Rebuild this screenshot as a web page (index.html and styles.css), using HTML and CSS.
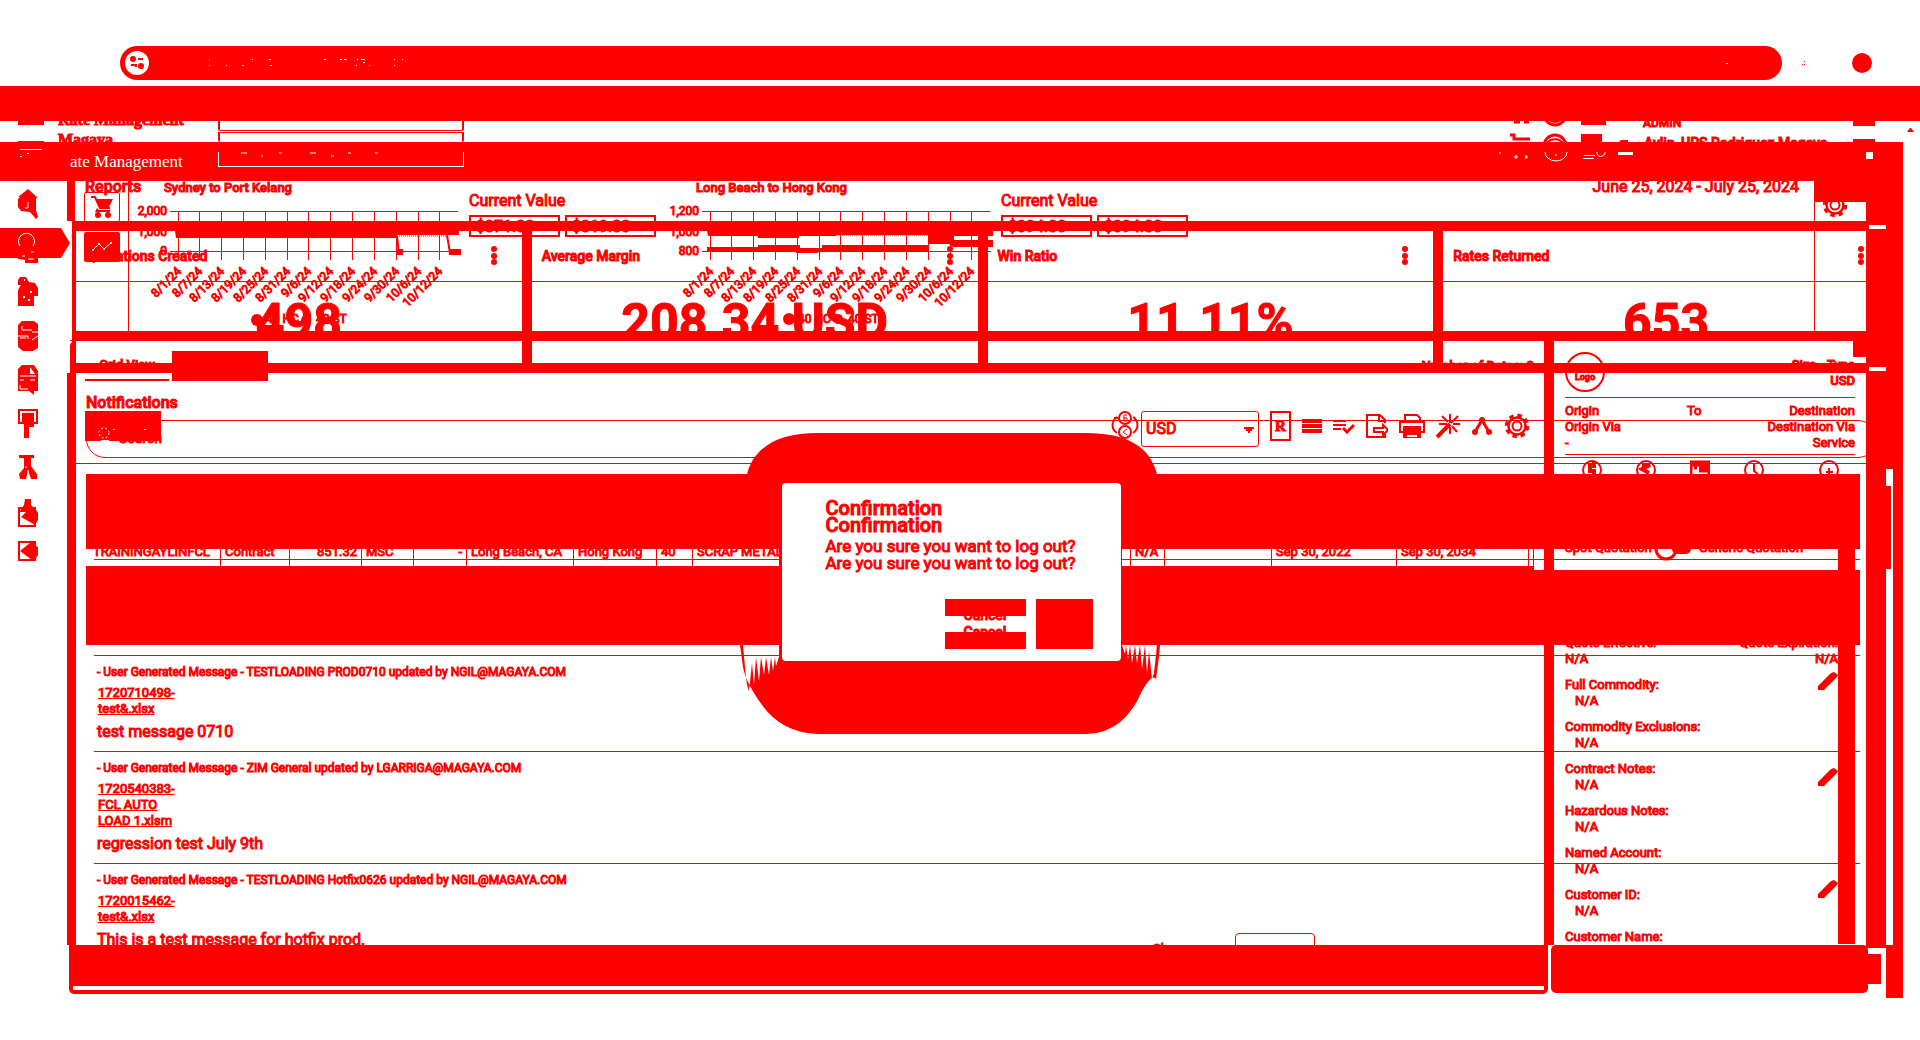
FILE: index.html
```html
<!DOCTYPE html>
<html lang="en">
<head>
<meta charset="utf-8">
<title>Rate Management</title>
<link rel="stylesheet" href="styles.css">
</head>
<body>
<svg class="defs" aria-hidden="true">
  <symbol id="gear" viewBox="0 0 26 26"><circle cx="13" cy="13" r="8.500" fill="none" stroke="#f00" stroke-width="2.500"/><circle cx="13" cy="13" r="10.500" fill="none" stroke="#f00" stroke-width="3.500" stroke-dasharray="4.500 3.750"/><circle cx="13" cy="13" r="4.500" fill="none" stroke="#f00" stroke-width="2"/></symbol>
  <symbol id="pencil" viewBox="0 0 20 18"><path d="M0 18v-4L13 1l3-1 4 3-1 2L6 18z" fill="#f00"/></symbol>
  <symbol id="gridlines" viewBox="0 0 333 150"><path d="M34 30.500H322M34 70.500H323M42.500 30v49M63.500 30v49M85.500 30v49M107.500 30v49M129.500 30v49M151.500 30v49M172.500 30v49M194.500 30v49M216.500 30v49M238.500 30v49M260.500 30v49M282.500 30v49M303.500 30v49" stroke="#f00" fill="none"/></symbol>
</svg>
<div class="stage">

<!-- Dashboard with reports and notifications -->
<main class="layer dash">
  <header class="reports"><h2>Reports</h2><p>June 25, 2024 - July 25, 2024</p></header>
  <section class="stats">
    <article><h3>Quotations Created<svg class="kebab" viewBox="0 0 6 20"><circle cx="3" cy="3" r="3"/><circle cx="3" cy="10" r="3"/><circle cx="3" cy="16" r="3"/></svg></h3><strong>498</strong></article>
    <article><h3>Average Margin<svg class="kebab" viewBox="0 0 6 20"><circle cx="3" cy="3" r="3"/><circle cx="3" cy="10" r="3"/><circle cx="3" cy="16" r="3"/></svg></h3><strong>208.34 USD</strong></article>
    <article><h3>Win Ratio<svg class="kebab" viewBox="0 0 6 20"><circle cx="3" cy="3" r="3"/><circle cx="3" cy="10" r="3"/><circle cx="3" cy="16" r="3"/></svg></h3><strong>11.11%</strong></article>
    <article><h3>Rates Returned<svg class="kebab" viewBox="0 0 6 20"><circle cx="3" cy="3" r="3"/><circle cx="3" cy="10" r="3"/><circle cx="3" cy="16" r="3"/></svg></h3><strong>653</strong></article>
    <div></div><div></div><div></div><div></div>
  </section>
  <section class="notices">
    <h2>Notifications</h2>
    <label class="search"><input type="text" placeholder="Search" aria-label="Search"></label>
    <div class="list">
      <div class="selected">
        <svg width="100" height="34" viewBox="0 0 100 34"><path d="M13 9.500h2M17 9.500h2M25 9.500h3M32 9.500h2M48 9.500h2M55 9.500h6M63 9.500h3M72 9.500h18M83 2.500h2M18 17.500h3M27 17.500h2M18 21h4M13 25.500h56" stroke="#fff"/></svg>
        <i></i>
      </div>
      <article>
        <div><h4>- User Generated Message - TESTLOADING PROD0710 updated by NGIL@MAGAYA.COM</h4><a href="#">1720710498-<br>test&amp;.xlsx</a><p>test message 0710</p></div>
        <button class="edit" aria-label="Edit"><svg width="20" height="18"><use href="#pencil"/></svg></button>
      </article>
      <article>
        <div><h4>- User Generated Message - ZIM General updated by LGARRIGA@MAGAYA.COM</h4><a href="#">1720540383-<br>FCL AUTO<br>LOAD 1.xlsm</a><p>regression test July 9th</p></div>
        <button class="edit" aria-label="Edit"><svg width="20" height="18"><use href="#pencil"/></svg></button>
      </article>
      <article>
        <div><h4>- User Generated Message - TESTLOADING Hotfix0626 updated by NGIL@MAGAYA.COM</h4><a href="#">1720015462-<br>test&amp;.xlsx</a><p>This is a test message for hotfix prod.</p></div>
        <button class="edit" aria-label="Edit"><svg width="20" height="18"><use href="#pencil"/></svg></button>
      </article>
    </div>
  </section>
</main>

<!-- Quote search: trend charts, rate grid, quote panel -->
<div class="layer quote">
  <section class="trends">
    <div class="tiles">
      <button class="cart" aria-label="Cart"><svg width="24" height="22" viewBox="0 0 24 22"><path d="M1 1h4l5 11h10" fill="none" stroke="#f00" stroke-width="2"/><path d="M5 3h18l-4 8H9zM7 12l-2 4h15v-2H9z" fill="#f00"/><circle cx="8" cy="19" r="3" fill="#f00"/><circle cx="18" cy="19" r="3" fill="#f00"/></svg></button>
      <button class="trend" aria-label="Trends"><svg width="22" height="12" viewBox="0 0 22 12"><path d="M2 9l6-6 5 5 7-6" fill="none" stroke="#fff"/><circle cx="2" cy="9" r="1" fill="#fff"/><circle cx="8" cy="3" r="1" fill="#fff"/><circle cx="13" cy="8" r="1" fill="#fff"/><circle cx="20" cy="2" r="1" fill="#fff"/></svg></button>
    </div>
    <div class="chart">
      <svg width="333" height="150" viewBox="0 0 333 150">
        <text x="28" y="11" class="t">Sydney to Port Kelang</text>
        <text x="31" y="34" class="e">2,000</text><text x="31" y="55" class="e">1,000</text><text x="31" y="74" class="e">0</text>
        <use href="#gridlines"/>
        <path d="M39 50h284v4h-62v3H40z" fill="#f00"/><path d="M261 55h50" stroke="#f00" stroke-dasharray="1 1"/>
        <path d="M261 55l2 18M311 54l3 18" stroke="#f00" stroke-width="2"/><path d="M260 68h7v6h-7zM313 68h12v6h-12z" fill="#f00"/>
        <g class="d"><text transform="translate(46 91) rotate(-45)">8/1/24</text><text transform="translate(67 91) rotate(-45)">8/7/24</text><text transform="translate(89 91) rotate(-45)">8/13/24</text><text transform="translate(111 91) rotate(-45)">8/19/24</text><text transform="translate(133 91) rotate(-45)">8/25/24</text><text transform="translate(155 91) rotate(-45)">8/31/24</text><text transform="translate(176 91) rotate(-45)">9/6/24</text><text transform="translate(198 91) rotate(-45)">9/12/24</text><text transform="translate(220 91) rotate(-45)">9/18/24</text><text transform="translate(242 91) rotate(-45)">9/24/24</text><text transform="translate(264 91) rotate(-45)">9/30/24</text><text transform="translate(286 91) rotate(-45)">10/6/24</text><text transform="translate(307 91) rotate(-45)">10/12/24</text></g>
        <circle cx="121" cy="139" r="6" fill="#f00"/><text x="130" y="142" class="g">40 HC</text><circle cx="170" cy="139" r="5" fill="#f00"/><text x="180" y="142" class="g">40 ST</text>
      </svg>
      <div class="value"><h3>Current Value</h3><div><span>$371.00</span><span>$319.00</span></div></div>
    </div>
    <div class="chart">
      <svg width="333" height="150" viewBox="0 0 333 150">
        <text x="28" y="11" class="t">Long Beach to Hong Kong</text>
        <text x="31" y="34" class="e">1,200</text><text x="31" y="55" class="e">1,000</text><text x="31" y="74" class="e">800</text>
        <use href="#gridlines"/>
        <path d="M39 50h286v5h-56l-8-1H168v1h-37v2H90v-2H40zM260 52h26v7h39v7h-40l-4-3h-21z" fill="#f00"/>
        <path d="M168 54h92" stroke="#f00" stroke-dasharray="1 1"/>
        <path d="M39 66h51v-2h42v3h22v-3h106v6H150v2h-22v-2H91v1H39z" fill="#f00"/>
        <g class="d"><text transform="translate(46 91) rotate(-45)">8/1/24</text><text transform="translate(67 91) rotate(-45)">8/7/24</text><text transform="translate(89 91) rotate(-45)">8/13/24</text><text transform="translate(111 91) rotate(-45)">8/19/24</text><text transform="translate(133 91) rotate(-45)">8/25/24</text><text transform="translate(155 91) rotate(-45)">8/31/24</text><text transform="translate(176 91) rotate(-45)">9/6/24</text><text transform="translate(198 91) rotate(-45)">9/12/24</text><text transform="translate(220 91) rotate(-45)">9/18/24</text><text transform="translate(242 91) rotate(-45)">9/24/24</text><text transform="translate(264 91) rotate(-45)">9/30/24</text><text transform="translate(286 91) rotate(-45)">10/6/24</text><text transform="translate(307 91) rotate(-45)">10/12/24</text></g>
        <circle cx="121" cy="138" r="6" fill="#f00"/><text x="130" y="142" class="g">40 HC</text><circle cx="170" cy="138" r="5" fill="#f00"/><text x="180" y="142" class="g">40 ST</text>
      </svg>
      <div class="value"><h3>Current Value</h3><div><span>$394.00</span><span>$394.00</span></div></div>
    </div>
    <div class="setup"><i></i><svg width="26" height="26"><use href="#gear"/></svg></div>
  </section>

  <section class="split">
    <div class="grid">
      <div class="tabs"><button>Grid View</button><button class="on" aria-label="Cards View"></button><p>Number of Dates: 2</p></div>
      <div class="tools">
        <button class="filter" aria-label="Filters"><svg width="76" height="30" viewBox="0 0 76 30"><circle cx="19" cy="22" r="5" fill="none" stroke="#fff" stroke-dasharray="2 2"/><path d="M28 18.500h2M59 18.500h2M16 29.500h8" stroke="#fff"/></svg></button>
        <svg class="fx" width="28" height="28" viewBox="0 0 28 28" fill="none" stroke="#f00" stroke-width="2"><circle cx="14" cy="7" r="6"/><circle cx="14" cy="21" r="6"/><path d="M6 6c-6 4-6 12 0 16M22 6c6 4 6 12 0 16M3 7h5M23 6l2 4"/><path d="M16 4h-3v6h3V7h-4M16 18l-4 3 4 3" stroke-width="1"/></svg>
        <select aria-label="Currency"><option>USD</option></select>
        <button class="r">R</button>
        <svg width="20" height="16" viewBox="0 0 20 16"><path d="M0 3h20M0 8h20M0 13h20" stroke="#f00" stroke-width="4"/></svg>
        <svg width="22" height="16" viewBox="0 0 22 16" fill="none" stroke="#f00"><path d="M0 3h13M0 7h13M0 11h8" stroke-width="2"/><path d="M10 10l4 4 7-7" stroke-width="3"/></svg>
        <svg width="22" height="26" viewBox="0 0 22 26" fill="none" stroke="#f00" stroke-width="2"><path d="M19 10V7l-5-5H1v22h18v-3"/><path d="M13 2v6h6"/><path d="M8 15v4h9v3l5-5-5-5v3z"/></svg>
        <svg width="26" height="26" viewBox="0 0 26 26" fill="none" stroke="#f00" stroke-width="2"><path d="M6 9V2h12l3 3v4M5 19H1V9h24v10h-4"/><path d="M5 14h16v10H5z" fill="#f00"/><path d="M8 22h10v2H8z" fill="#fff" stroke="none"/></svg>
        <svg width="24" height="26" viewBox="0 0 24 26" fill="none" stroke="#f00"><path d="M1 24L14 11" stroke-width="4"/><path d="M14 1v9M14 14v7M3 11h8M17 11h7M6 3l6 6M22 3l-7 7M16 13l5 6" stroke-width="2"/></svg>
        <svg width="22" height="20" viewBox="0 0 22 20"><circle cx="11" cy="4" r="3" fill="#f00"/><circle cx="4" cy="16" r="3" fill="#f00"/><circle cx="18" cy="16" r="3" fill="#f00"/><path d="M4 16l7-12 7 12" fill="none" stroke="#f00" stroke-width="3"/></svg>
        <svg width="26" height="26"><use href="#gear"/></svg>
      </div>
      <table>
        <colgroup><col class="w135"><col class="w69"><col class="w72"><col class="w52"><col class="w53"><col class="w107"><col class="w83"><col class="w36"><col><col class="w34"><col class="w107"><col class="w125"><col class="w132"><col class="w5"></colgroup>
        <thead><tr><th colspan="14"></th></tr></thead>
        <tbody><tr><td>TRAININGAYLINFCL</td><td>Contract</td><td class="n">851.32</td><td>MSC</td><td class="n">-</td><td>Long Beach, CA</td><td>Hong Kong</td><td>40</td><td>SCRAP METAL</td><td>N/A</td><td></td><td>Sep 30, 2022</td><td>Sep 30, 2034</td><td></td></tr></tbody>
        <tfoot><tr><td colspan="14"></td></tr></tfoot>
      </table>
      <div class="pager"><label>Show<select aria-label="Rows"><option>25</option></select></label></div>
    </div>
    <aside class="side">
      <div class="who"><span class="logo">Logo</span><p>Size - Type<br>USD</p></div>
      <div class="route"><p><span>Origin</span><span>To</span><span>Destination</span></p><p><span>Origin Via</span><span>Destination Via</span></p><p><span>-</span><span>Service</span></p></div>
      <div class="steps">
        <svg viewBox="0 0 20 20"><circle cx="10" cy="10" r="9"/><path d="M12 2v4h-4v5h4v6" stroke-width="4"/></svg>
        <svg viewBox="0 0 20 20"><circle cx="10" cy="10" r="9"/><path d="M6 5l8 0-8 4 7 4" stroke-width="4"/></svg>
        <svg viewBox="0 0 20 20"><path d="M1 2h18v16H1zM2 5h16M4 8h3M9 8h9M9 11h9" stroke-width="3"/></svg>
        <svg viewBox="0 0 20 20"><circle cx="10" cy="10" r="9"/><path d="M10 4v7l4 3"/></svg>
        <svg viewBox="0 0 20 20"><circle cx="10" cy="10" r="9"/><path d="M10 8v8M7 12h7"/></svg>
      </div>
      <div class="facts">
        <dl>
          <div class="mode"><span>Spot Quotation</span><svg width="38" height="24" viewBox="0 0 38 24"><rect x="18" y="5" width="19" height="12" rx="5" fill="#f00"/><circle cx="12" cy="12" r="10" fill="none" stroke="#f00" stroke-width="3"/></svg><span>Generic Quotation</span></div>
          <div class="dates"><p>Quote Effective:<br>N/A</p><p>Quote Expiration:<br>N/A</p></div>
          <dt>Full Commodity:</dt><dd>N/A</dd>
          <dt>Commodity Exclusions:</dt><dd>N/A</dd>
          <dt>Contract Notes:</dt><dd>N/A</dd>
          <dt>Hazardous Notes:</dt><dd>N/A</dd>
          <dt>Named Account:</dt><dd>N/A</dd>
          <dt>Customer ID:</dt><dd>N/A</dd>
          <dt>Customer Name:</dt>
        </dl>
        <i></i>
      </div>
    </aside>
  </section>
  <footer><div class="left"><i></i></div><div class="right"></div><div class="stub"></div></footer>
</div>

<!-- Browser frame and application header -->
<div class="layer frame">
  <div class="omni">
    <div class="bar"><svg width="24" height="24" viewBox="0 0 24 24"><circle cx="12" cy="12" r="12" fill="#fff"/><circle cx="8" cy="8" r="3" fill="#f00"/><circle cx="16" cy="15" r="3" fill="#f00"/><path d="M13 8h5M6 14h5v2" stroke="#f00" stroke-width="2" fill="none"/></svg>
    <svg width="200" height="8" viewBox="0 0 200 8"><path d="M0 .500h1M0 6.500h1M17 6.500h1M33 6.500h2M43 .500h1M60 .500h2M61 6.500h2M115 .500h2M131 .500h2M135 .500h3M148 .500h1M152 .500h4M147 6.500h1M154 3.500h2M160 6.500h1M185 .500h1M185 6.500h1M193 .500h1" stroke="#fff"/></svg><span></span><i></i></div>
    <svg width="4" height="4" viewBox="0 0 4 4"><path d="M2 .500h1M0 3.500h1M2 3.500h1" stroke="#f00"/></svg>
    <b></b>
  </div>
  <div class="band1"></div>
  <div class="strip">
    <svg width="26" height="21" viewBox="0 0 26 21"><path d="M0 0h26v4H0zM0 20h26v1H0z" fill="#f00"/></svg>
    <p class="brand">Rate Management<br>Magaya</p>
    <div class="fields"><i></i><i></i></div>
    <svg class="hicons" width="120" height="21" viewBox="0 0 120 21" fill="none" stroke="#f00"><path d="M4 1h6M14 1h5M0 14h4v4h16" stroke-width="3"/><circle cx="45" cy="-7" r="11" stroke-width="3"/><path d="M38-2q7 6 14 0M37 22a9 7 0 0 1 16 0" stroke-width="2"/><circle cx="45" cy="25" r="11" stroke-width="3"/><path d="M71 0h25v4H71zM71 13h21v8H71zM111 19h7v2h-9z" fill="#f00" stroke="none"/></svg>
    <p class="user">ADMIN<br><span>Aylin_UPS Rodriguez Magaya</span></p>
    <svg class="end" width="22" height="21" viewBox="0 0 22 21"><path d="M0 0h22v5H0zM0 18h22v3H0z" fill="#f00"/></svg>
    <svg width="8" height="5" viewBox="0 0 8 5"><path d="M0 4l3-4h1l3 4z" fill="#f00"/></svg>
  </div>
  <div class="band2">
    <svg width="24" height="18" viewBox="0 0 24 18"><path d="M0 .500h22M0 7.500h2" stroke="#fff"/><path d="M7 4.500h2" stroke="#fff"/></svg>
    <p>ate Management</p>
    <div><svg width="140" height="8" viewBox="0 0 140 8"><path d="M0 1h6M20 4h2M38 1h3M69 1h6M90 4h3M107 1h3M134 1h3" stroke="#fff"/></svg></div>
    <svg class="marks" width="110" height="12" viewBox="0 0 110 12" fill="none" stroke="#fff"><path d="M0 1h2M17 3v4M27 3v4M15 5h4M26 5h3M46 0a11 9 0 0 0 22 0M57 2v2M85 3.500h11M84 6.500h11M98 0v2q3 5 8 0V0"/></svg>
    <i class="line"></i><i class="sq"></i>
  </div>
  <div class="edge"><div class="a"><i></i><i></i></div><div class="b"><i></i></div><div class="c"></div></div>
</div>

<!-- Navigation rail -->
<nav class="layer rail">
  <a href="#" aria-label="Home"><svg viewBox="0 0 70 44"><path d="M28 7l10 9h-2v12l2 7-2 2-6-7-9-1-3-4v-8l2-2h-2z"/><path d="M28 20v6h-3" stroke="#fff" fill="none"/></svg></a>
  <a href="#" aria-label="Search"><svg viewBox="0 0 70 44"><path d="M0 2h61l9 15-9 15H38v5H25v-3l-7-1v-1H0z"/><path d="M20 20a8 8 0 1 1 13 0M22 30h3M31 26h3M28 33h6" fill="none" stroke="#fff"/></svg></a>
  <a href="#" aria-label="Shipments"><svg viewBox="0 0 70 44"><path d="M20 7h6l3 5 6 1 3 5v8h-4v10H18V20l3-5h-3v-5z"/><path d="M24 10h1M30 22h2M23 27h2M28 30h2" stroke="#fff" stroke-width="2"/></svg></a>
  <a href="#" aria-label="Rates"><svg viewBox="0 0 70 44"><path d="M22 7h12l4 3v24l-5 3H23l-5-4V11z"/><path d="M22 12v4h10M18 22h10v3M20 24h6M32 18h6M32 26l6-4" fill="none" stroke="#fff"/></svg></a>
  <a href="#" aria-label="Documents"><svg viewBox="0 0 70 44"><path d="M22 7h12l4 6v20h-4v4l-5-4H18V11z"/><path d="M30 9l5 7h-5z" fill="#fff"/><path d="M20 18h16M20 22h4M30 22h5M20 27v4h8" fill="none" stroke="#fff"/></svg></a>
  <a href="#" aria-label="Display"><svg viewBox="0 0 70 44"><path d="M19 8h18v13H19z" fill="none" stroke="#f00" stroke-width="2"/><path d="M22 11h12v14h-5v11h-5V20h-2z"/></svg></a>
  <a href="#" aria-label="Integrations"><svg viewBox="0 0 70 44"><path d="M19 9h15v3h-3v8l6 8v5h-6l-3-9-2 9h-6l-1-5 5-6V12h-5z"/><path d="M26 20v2M28 24v2" stroke="#fff"/></svg></a>
  <a href="#" aria-label="Export"><svg viewBox="0 0 70 44"><path d="M19 18h16v18H19z" fill="none" stroke="#f00" stroke-width="2"/><path d="M25 9h6v6l5 5 2 3v7l-3 5-14-8 5-5h-7l5-7z"/></svg></a>
  <a href="#" aria-label="Log out"><svg viewBox="0 0 70 44"><path d="M19 8h16v18H19z" fill="none" stroke="#f00" stroke-width="2"/><path d="M20 17l11-9h3v3l4 2v8l-3 5h-3z"/></svg></a>
</nav>

<!-- Log-out confirmation -->
<div class="layer over">
  <div class="modal">
    <svg width="424" height="302" viewBox="0 0 424 302"><path d="M7 41C14 14 38 0 78 0H345C388 0 410 14 417 41L382 60V212l3 9 1-9 2 14 2-14 2 18 3-18 2 18 3-18 2 24 3-24 2 28 2-22 3 28 2-6 2-18 2-22 3 0-2 24-3 22Q412 240 402 258Q384 300 347 301H78Q42 300 22 272Q6 250 3 234L0 212h3l2 22 2 18 2 6 3-28 2 22 2-28 3 24 2-24 3 18 2-18 3 18 2-18 2 14 2-14 1 9 3-9V60z" fill="#f00"/></svg>
    <section role="dialog" aria-label="Confirmation">
      <h2>Confirmation<br>Confirmation</h2>
      <p>Are you sure you want to log out?<br>Are you sure you want to log out?</p>
      <div><button class="cancel">Cancel<br>Cancel</button><button class="yes" aria-label="Yes"></button></div>
    </section>
  </div>
</div>
</div>
</body>
</html>
```
FILE: styles.css
```css
* { box-sizing: border-box; margin: 0; padding: 0; }
body { background: #fff; color: #f00; font: 13px/16px Roboto, sans-serif; -webkit-text-stroke: 1px #f00; }
button, select, input { font: inherit; color: #f00; background: none; border: 0; -webkit-text-stroke: inherit; }
i, b { display: block; }
svg { display: block; flex: none; }
a { color: inherit; }
.defs { width: 0; height: 0; position: absolute; }
.stage { display: grid; min-height: 100vh; overflow: hidden; }
.layer { grid-area: 1 / 1; min-width: 0; display: flex; flex-direction: column; }

/* dashboard */
.dash { padding-top: 181px; }
.reports { height: 40px; display: flex; justify-content: space-between; padding: 0 121px 0 10px; margin-left: 67px; border-left: 8px solid #f00; font-size: 16px; }
.reports h2, .notices h2 { font-size: 16px; font-weight: 500; line-height: 12px; }
.reports p { line-height: 12px; }
.stats { display: grid; grid-template-columns: repeat(4, minmax(0, 1fr)); grid-template-rows: 100px 22px; gap: 10px; padding: 10px 0; margin: 0 31px 0 72px; border-left: 4px solid #f00; background: #f00; }
.stats > * { background: #fff; overflow: hidden; }
.stats h3 { display: flex; justify-content: space-between; align-items: center; height: 51px; padding: 0 25px 0 10px; border-bottom: 1px solid #f00; font-size: 14px; font-weight: 500; line-height: 16px; }
.stats strong { display: block; height: 49px; padding-top: 12px; text-align: center; font-size: 50px; line-height: 56px; font-weight: 700; }
.kebab { width: 6px; height: 20px; fill: #f00; }
.notices { flex: 1; margin: 0 54px 0 67px; border-left: 8px solid #f00; max-height: 572px; overflow: hidden; }
.notices h2 { padding: 24px 0 0 11px; height: 47px; line-height: 12px; }
.search { display: block; margin: 0 -11px 5px 11px; height: 38px; border: 1px solid #f00; border-radius: 19px; padding: 5px 0 0 32px; }
.search input { width: 200px; height: 24px; font-size: 14px; }
.search input::placeholder { color: #f00; opacity: 1; }
.list { border-top: 1px solid #f00; padding: 10px 6px 0 11px; }
.selected { height: 171px; border: solid #f00; border-width: 75px 0; margin-bottom: 10px; }
.selected svg { margin-top: -51px; height: 34px; }
.selected i { margin: 27px 0 0 8px; height: 1px; background: #f00; }
.list article { display: flex; justify-content: space-between; margin-left: 8px; padding: 8px 22px 10px 3px; border-top: 1px solid #f00; }
.list h4 { font-size: 12px; font-weight: 400; line-height: 16px; padding: 5px 0; margin-top: -5px; }
.list article a { display: block; font-size: 13px; line-height: 16px; padding-left: 1px; }
.list article p { font-size: 16px; line-height: 18px; padding: 6px 0 0; }
.edit { height: 18px; margin-top: 8px; }

/* quote search */
.quote { padding-top: 181px; }
.trends { display: flex; height: 159px; padding-bottom: 9px; margin: 0 54px 0 84px; }
.tiles { width: 45px; border-right: 1px solid #f00; padding-top: 11px; margin-right: 7px; }
.tiles button { display: grid; place-items: center; width: 36px; height: 30px; border-radius: 2px; }
.tiles .cart { border: 1px solid #f00; margin-bottom: 10px; }
.tiles .trend { background: #f00; }
.chart { display: flex; width: 532px; }
.chart text { fill: #f00; stroke: #f00; stroke-width: 1px; font-size: 12px; }
.chart .t { font-size: 13px; font-weight: 500; }
.chart .e, .chart .d { text-anchor: end; }
.chart .g { font-size: 12px; }
.value { padding-top: 11px; }
.value h3 { font-size: 16px; font-weight: 400; line-height: 18px; padding-bottom: 5px; }
.value div { display: flex; gap: 5px; }
.value span { width: 91px; height: 22px; border: 2px solid #f00; font-size: 16px; line-height: 20px; padding-left: 5px; }
.setup { margin-left: auto; width: 52px; border-left: 1px solid #f00; }
.setup i { height: 21px; background: #f00; }
.setup svg { margin: -10px 0 0 7px; }
.split { display: flex; height: 605px; margin: 0 54px 0 70px; border-top: 1px solid #f00; }
.grid { flex: 1; min-width: 0; display: flex; flex-direction: column; border: solid #f00; border-width: 0 10px 0 6px; border-radius: 5px 0 0; padding: 10px 10px 0 9px; overflow: hidden; }
.tabs { display: flex; gap: 3px; height: 30px; }
.tabs button { width: 84px; height: 30px; border-bottom: 2px solid #f00; font-weight: 500; }
.tabs .on { width: 96px; background: #f00; }
.tabs p { margin-left: auto; line-height: 30px; font-weight: 500; }
.tools { display: flex; align-items: center; gap: 11px; height: 30px; margin-top: 30px; padding-right: 4px; }
.filter { width: 76px; height: 30px; background: #f00; margin-right: auto; }
.tools .fx { align-self: flex-start; margin-right: -9px; }
.tools select { appearance: none; width: 118px; height: 36px; align-self: flex-start; border: 1px solid #f00; border-radius: 3px; padding: 0 4px; font-size: 16px; background: linear-gradient(#f00, #f00) 106px 17px / 2px 4px no-repeat, linear-gradient(#f00, #f00) 102px 15px / 10px 2px no-repeat, linear-gradient(#f00, #f00) 104px 17px / 6px 2px no-repeat; }
.tools .r { width: 21px; height: 30px; border: 2px solid #f00; font: 700 15px/16px "Liberation Serif", serif; }
table { width: calc(100% - 1px); margin: 33px 0 0 1px; border-collapse: separate; border-spacing: 0; table-layout: fixed; flex: none; }
th { height: 75px; background: #f00; }
tfoot td { height: 79px; background: #f00; }
tbody td { height: 17px; padding: 0 4px; line-height: 6px; border-right: 1px solid #f00; white-space: nowrap; vertical-align: top; font-size: 13px; }
tbody td:first-child { padding-left: 7px; }
tbody .n { text-align: right; }
.w135 { width: 135px; } .w69 { width: 69px; } .w72 { width: 72px; } .w52 { width: 52px; } .w53 { width: 53px; } .w107 { width: 107px; } .w83 { width: 83px; } .w36 { width: 36px; } .w34 { width: 34px; } .w125 { width: 125px; } .w132 { width: 132px; } .w5 { width: 5px; }
.pager { display: flex; justify-content: flex-end; margin: auto 219px 0 0; height: 12px; overflow: hidden; }
.pager label { display: flex; gap: 50px; line-height: 32px; }
.pager select { appearance: none; width: 80px; height: 36px; border: 1px solid #f00; border-radius: 4px; padding-left: 8px; font-size: 13px; }
.side { width: 312px; padding: 0 11px; overflow: hidden; background: linear-gradient(#f00, #f00) right 0 top 0 / 13px 16px no-repeat; }
.who { display: flex; justify-content: space-between; align-items: flex-start; height: 57px; padding-top: 11px; border-bottom: 1px solid #f00; text-align: right; font-weight: 500; }
.who p { padding-top: 5px; }
.logo { width: 40px; height: 40px; border: 2px solid #f00; border-radius: 50%; text-align: center; font-size: 9px; line-height: 46px; font-weight: 500; }
.route { height: 57px; padding-top: 5px; border-bottom: 1px solid #f00; }
.route p { display: flex; justify-content: space-between; font-size: 13px; line-height: 16px; }
.steps { display: flex; gap: 34px; height: 90px; padding: 5px 0 0 17px; }
.steps svg { width: 20px; height: 20px; fill: none; stroke: #f00; stroke-width: 2; }
.steps svg:last-child { margin-left: 21px; }
.facts { display: flex; justify-content: space-between; margin-top: -6px; }
.facts i { width: 17px; height: 400px; background: #f00; margin-top: 5px; }
.facts dl { width: 273px; }
.mode { display: flex; gap: 2px; line-height: 16px; height: 96px; padding-top: 1px; }
.mode svg { margin-top: -3px; }
.mode span:last-child { margin-left: 5px; }
.dates { display: flex; justify-content: space-between; height: 42px; }
.dates p:last-child { text-align: right; }
dt, dd { line-height: 16px; }
dd { margin-left: 10px; height: 26px; }
footer { display: flex; align-items: flex-start; gap: 3px; margin: 0 39px 0 69px; }
footer .left { flex: 1; height: 49px; background: #f00; border-radius: 0 0 5px 5px; padding: 41px 4px 0; }
footer .left i { height: 4px; background: #fff; }
footer .right { width: 317px; height: 48px; background: #f00; border-radius: 5px; }
footer .stub { width: 13px; height: 30px; margin: 9px 0 0 -3px; background: #f00; }

/* browser frame */
.frame { padding-top: 46px; pointer-events: none; }
.omni { display: flex; align-items: center; height: 34px; margin: 0 48px 6px 120px; }
.bar { flex: 1; display: flex; align-items: center; height: 34px; margin-right: 20px; padding: 0 54px 0 5px; border-radius: 17px; background: #f00; gap: 60px; }
.bar span { flex: 1; }
.bar i { width: 2px; height: 1px; background: #fff; }
.omni b { width: 20px; height: 20px; margin-left: 46px; border-radius: 50%; background: #f00; }
.band1 { height: 35px; background: #f00; }
.strip { display: flex; align-items: flex-start; height: 21px; padding: 0 5px 0 18px; overflow: hidden; }
.brand { width: 160px; margin: -11px 0 0 14px; font: 700 16px/20px "Liberation Serif", serif; }
.fields { width: 246px; }
.fields i { border: solid #f00; border-width: 0 2px 1px; height: 10px; border-radius: 0 0 2px 2px; }
.fields i + i { margin-top: 1px; border-width: 1px 2px 0; }
.hicons { margin-left: auto; }
.user { width: 210px; margin: -8px 0 0 13px; font-size: 12px; line-height: 20px; white-space: nowrap; font-weight: 500; }
.user span { font-size: 14px; padding-left: 1px; }
.end { margin-right: 32px; }
.strip svg:last-child { margin-top: 7px; }
.band2 { display: flex; height: 39px; margin-right: 17px; padding: 7px 30px 0 20px; background: #f00; }
.band2 p { width: 148px; margin-left: 26px; font: 400 17px/26px "Liberation Serif", serif; color: #fff; -webkit-text-stroke: 0; }
.band2 > div { width: 246px; height: 15px; margin-top: 3px; padding-left: 22px; border: solid #fff; border-width: 0 1px 1px; }
.marks { margin: 3px 0 0 auto; }
.line { width: 15px; height: 3px; margin: 3px 0 0 9px; background: #fff; }
.sq { width: 7px; height: 7px; margin: 3px 0 0 233px; background: #fff; }
.edge { display: flex; justify-content: flex-end; align-items: flex-start; margin-right: 17px; }
.edge .a { width: 20px; height: 767px; padding: 44px 0 0 3px; background: #f00; }
.edge .a i { height: 4px; background: #fff; margin-bottom: 138px; }
.edge .b { width: 7px; height: 817px; border: solid #f00; border-width: 288px 0 53px; padding-top: 17px; }
.edge .b i { width: 5px; height: 83px; background: #f00; }
.edge .c { width: 10px; height: 817px; background: #f00; }

/* navigation rail */
.rail { width: 70px; padding-top: 182px; }
.rail svg { width: 70px; height: 44px; fill: #f00; }

/* log-out dialog */
.over { align-items: center; padding: 433px 17px 0 0; }
.modal { display: grid; }
.modal > * { grid-area: 1 / 1; }
.modal section { margin: 50px 43px 74px 42px; background: #fff; border-radius: 4px; padding: 17px 28px 12px 44px; }
.modal h2 { font-size: 20px; line-height: 17px; font-weight: 500; }
.modal p { font-size: 17px; line-height: 17px; padding-top: 4px; white-space: nowrap; }
.modal section > div { display: flex; justify-content: flex-end; gap: 10px; margin-top: 27px; }
.cancel { width: 81px; height: 50px; border: solid #f00; border-width: 17px 0; display: grid; place-content: center; overflow: hidden; font-size: 14px; line-height: 17px; font-weight: 500; }
.yes { width: 57px; height: 50px; background: #f00; }
```
